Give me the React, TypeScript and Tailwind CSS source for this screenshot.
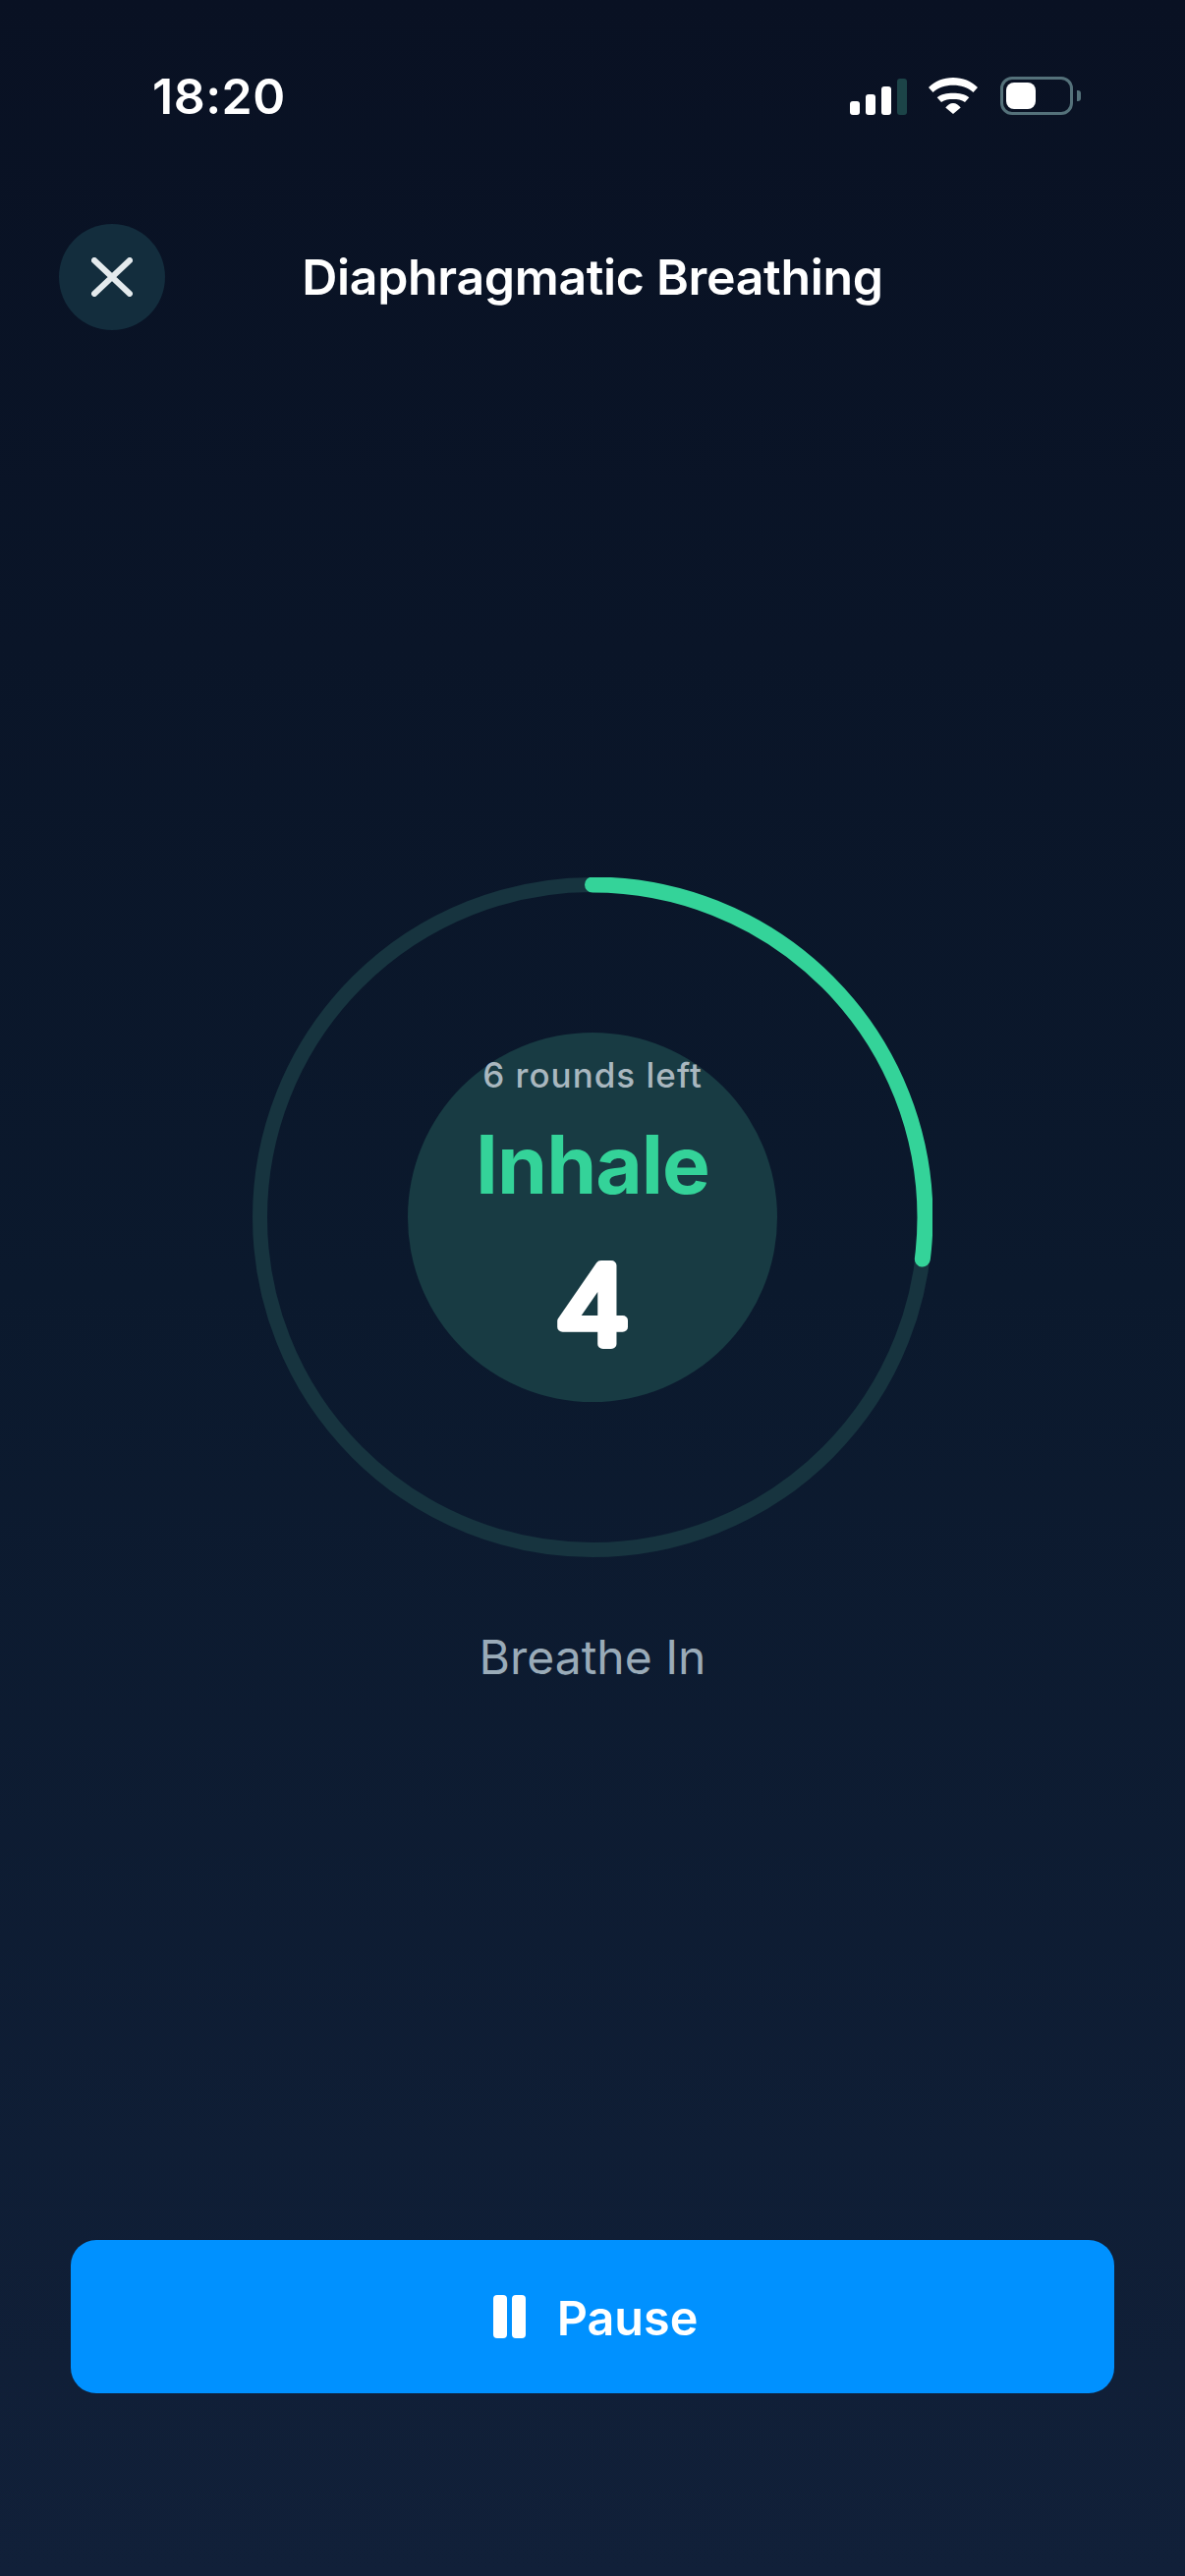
export default function App() {
  const r = 338.5;
  const c = 2 * Math.PI * r;
  const progress = 0.27;
  return (
    <div className="flex flex-col w-[1206px] h-[2622px] bg-linear-to-b from-[#091123] via-[#0b192d] to-[#112039] font-['Inter','Noto_Sans',sans-serif] text-white">
      <div className="flex items-center justify-between h-[39px] mt-[78px] pl-[155px] pr-[106px]">
        <span className="text-[50px] leading-none font-semibold tracking-[0.5px]">18:20</span>
        <div className="flex items-center">
          <div className="flex items-end gap-[6px] h-[37px] mt-[1px]">
            <div className="w-[10px] h-[14px] rounded-[3px] bg-white" />
            <div className="w-[10px] h-[21px] rounded-[3px] bg-white" />
            <div className="w-[10px] h-[29px] rounded-[3px] bg-white" />
            <div className="w-[10px] h-[37px] rounded-[3px] bg-[#1c4448]" />
          </div>
          <svg className="ml-[22px]" width="50" height="37" viewBox="0 0 50 37" fill="#fff">
            <path d="M0 10C6.500 3.500 15 0 25 0s18.500 3.500 25 10l-4.500 5C40 10 33 7.700 25 7.700S10 10 4.500 15z" />
            <path d="M8.700 20.300C13 16.500 18.500 15.700 25 15.700s12 .8 16.300 4.600L37 25c-3.500-2.500-7.500-3-12-3s-8.500.5-12 3z" />
            <path d="M17.300 30.500c2.200-2.700 4.700-4.500 7.700-4.500s5.500 1.800 7.700 4.500L25 37z" />
          </svg>
          <div className="flex items-center ml-[23px] gap-[4px]">
            <div className="flex items-center w-[74px] h-[39px] p-[3px] rounded-[12px] border-[3px] border-[#54717a]">
              <div className="w-[30px] h-[27px] rounded-[8px] bg-white" />
            </div>
            <div className="w-[4px] h-[11px] rounded-r-[3px] bg-[#54717a]" />
          </div>
        </div>
      </div>

      <div className="grid grid-cols-[108px_1fr_108px] items-center mt-[111px] px-[60px]">
        <button className="flex items-center justify-center w-[108px] h-[108px] rounded-full bg-[#132d3d]">
          <svg width="42" height="40" viewBox="0 0 42 40" fill="none" stroke="#e4eaed" strokeWidth="6" strokeLinecap="round">
            <path d="M3 3L39 37M39 3L3 37" />
          </svg>
        </button>
        <h1 className="text-center text-[50px] leading-[60px] font-semibold tracking-[-0.33px]">Diaphragmatic Breathing</h1>
        <div />
      </div>

      <div className="relative flex items-center justify-center self-center w-[692px] h-[692px] mt-[557px]">
        <svg className="absolute inset-0" width="692" height="692" viewBox="0 0 692 692" fill="none">
          <circle cx="346" cy="346" r={r} stroke="#17343f" strokeWidth="15" />
          <circle
            cx="346"
            cy="346"
            r={r}
            stroke="#34d399"
            strokeWidth="16"
            strokeLinecap="round"
            strokeDasharray={`${c * progress} ${c}`}
            transform="rotate(-90 346 346)"
          />
        </svg>
        <div className="flex flex-col items-center w-[376px] h-[376px] pt-[21px] rounded-full bg-[#183b43]">
          <span className="text-[35px] leading-[44px] font-medium tracking-[1px] text-[#a9b7bf]">6 rounds left</span>
          <span className="mt-[22px] text-[82px] leading-[96px] font-bold text-[#34d399] tracking-[-1px]">Inhale</span>
          <svg className="mt-[10px]" width="160" height="170" viewBox="0 0 160 170" fill="#fff" stroke="#fff" strokeWidth="10" strokeLinejoin="round">
            <text
              x="0"
              y="0"
              transform="translate(80 124) scale(1.1 1)"
              textAnchor="middle"
              fontFamily="Inter"
              fontWeight="300"
              fontSize="110"
            >
              4
            </text>
          </svg>
        </div>
      </div>

      <p className="mt-[72px] text-center text-[48px] leading-[60px] text-[#9aabb8]">Breathe In</p>

      <button className="flex items-center justify-center gap-[32px] h-[156px] mx-[72px] mt-[auto] mb-[186px] pl-[6px] rounded-[26px] bg-[#0091ff]">
        <span className="flex gap-[5px]">
          <span className="w-[14px] h-[44px] rounded-[4px] bg-white" />
          <span className="w-[14px] h-[44px] rounded-[4px] bg-white" />
        </span>
        <span className="mt-[3px] text-[48.5px] leading-[60px] font-semibold">Pause</span>
      </button>
    </div>
  );
}
